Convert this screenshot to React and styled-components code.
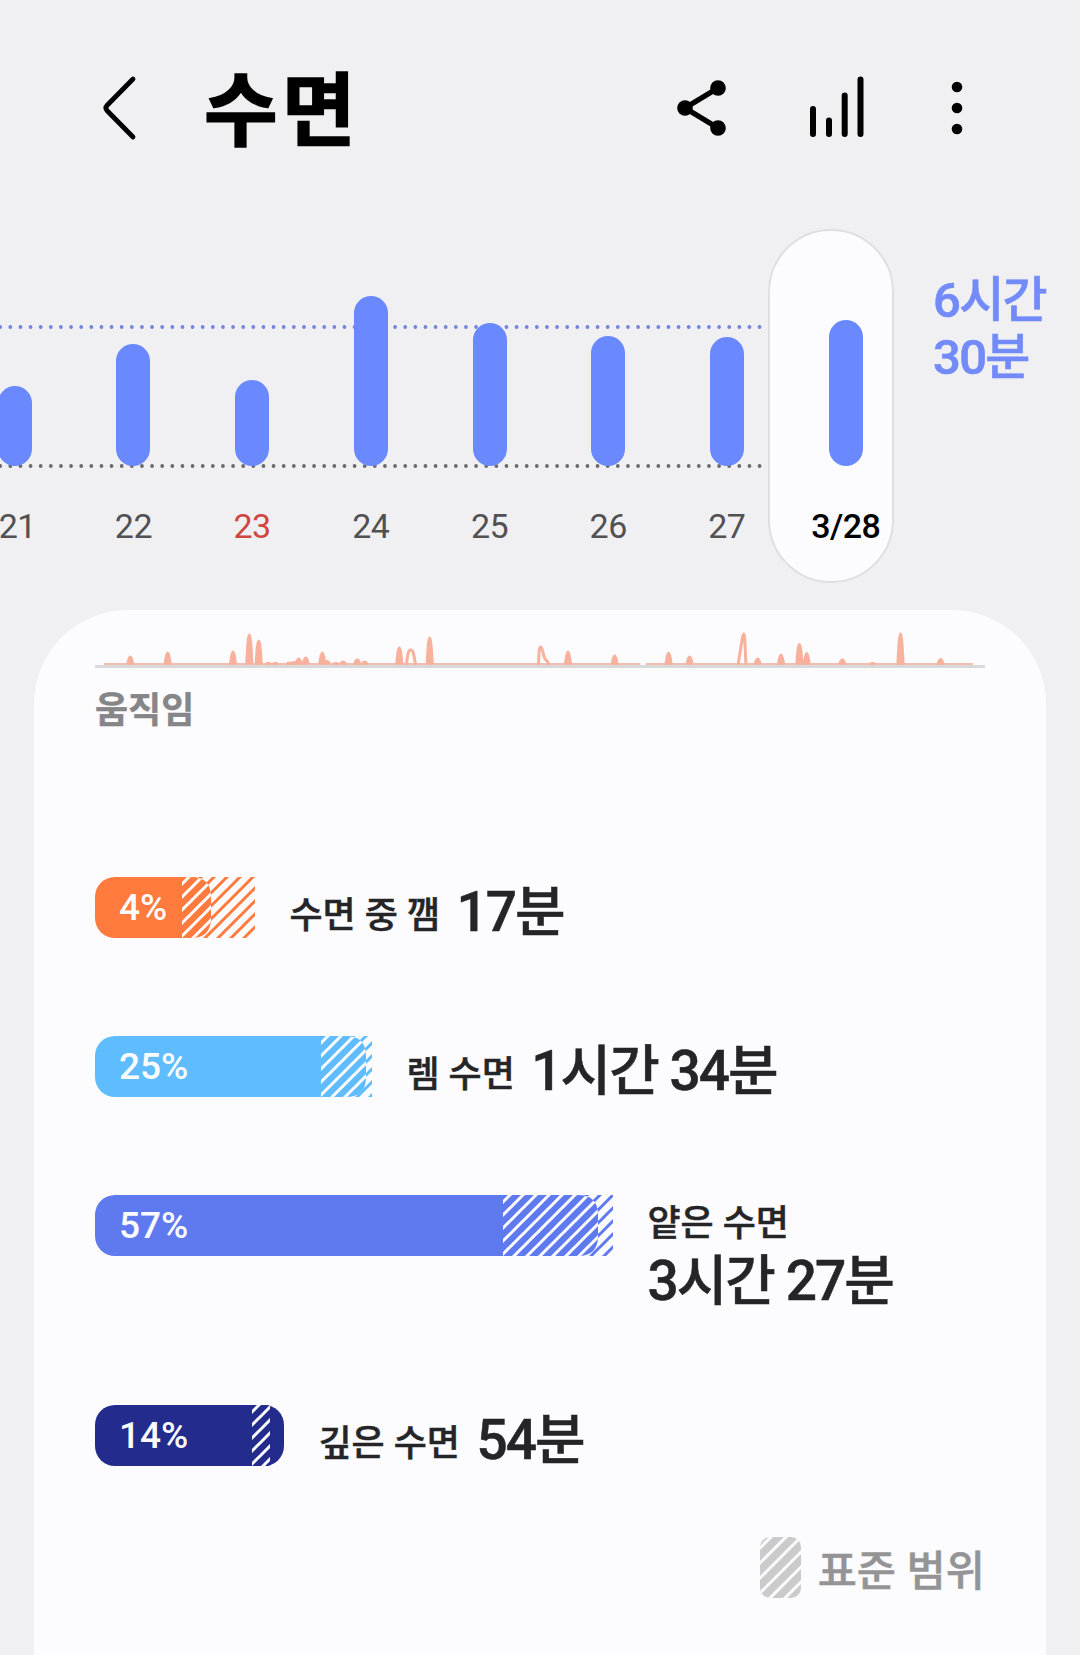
import React, { useId } from 'react';
import styled, { createGlobalStyle } from 'styled-components';

const days = [
  { label: '21', height: 80.5 },
  { label: '22', height: 122.5 },
  { label: '23', height: 86, holiday: true },
  { label: '24', height: 170 },
  { label: '25', height: 143 },
  { label: '26', height: 130.5 },
  { label: '27', height: 129.5 },
];

const stages = [
  { name: '수면 중 깸', time: '17분', percent: '4%', color: '#ff7a3d', width: 116, total: 160, from: 87, to: 160 },
  { name: '렘 수면', time: '1시간 34분', percent: '25%', color: '#5ebcff', width: 271, total: 277, from: 226, to: 277 },
  { name: '얕은 수면', time: '3시간 27분', percent: '57%', color: '#5f7aef', width: 503, total: 518, from: 408, to: 518, stacked: true },
  { name: '깊은 수면', time: '54분', percent: '14%', color: '#232c8c', width: 189, total: 189, from: 157, to: 175 },
];

// [x, height] of every narrow spike, measured on the movement axis
const spikes = [
  [35.3, 7], [72.7, 11], [138, 12], [154.3, 29], [163.7, 23], [173.3, 0.8], [180.3, 0.8],
  [194.3, 1], [199, 1.4], [203.7, 5], [210.7, 6], [227.3, 11], [232, 2.5], [241, 0.6], [248, 2],
  [262.3, 4], [269.7, 2], [304.3, 16], [334.7, 26], [473, 12], [519.6, 8], [573.6, 11],
  [594.6, 7], [662.7, 5], [686, 9], [704.4, 19.5], [711.7, 10.5], [747.3, 4], [777.5, 0.6],
  [805.5, 30], [845.6, 4.5],
];

const spikePath = ([x, h]) =>
  `M${x - 2.6} 34.4 C${x - 1.8} ${34 - h * 0.6} ${x - 1} ${34 - h} ${x} ${34 - h} C${x + 1} ${34 - h} ${x + 1.8} ${34 - h * 0.6} ${x + 2.6} 34.4`;

const Movement = () => (
  <MovementChart viewBox="0 0 890 42">
    <rect x="0" y="35" width="890" height="3" fill="#d9d9da" />
    <path d="M9 34H545.3M550.7 34H878" stroke="#f0bfb1" strokeWidth="2.2" fill="none" />
    <g fill="none" stroke="#f8b19c" strokeWidth="3" strokeLinejoin="round">
      {spikes.map((s) => (
        <path key={s[0]} d={spikePath(s)} fill="#f8b19c" />
      ))}
      <path d="M311.5 35C312.5 24 313.5 20 315.7 20C318 20 319 24 320.5 35" />
      <path d="M443.5 35C444 24 444 17 445.5 17C448 17 448 27 450.5 29.5C453 31 453 32 454 35" />
      <path d="M643 35C646 18 647.5 4 648.8 4C650 4 650 18 651 35" />
    </g>
  </MovementChart>
);

const StageHatch = ({ stage }) => {
  const id = useId();
  const w = stage.to - stage.from;
  const end = stage.width - stage.from;
  const inner = `M-30 0H${end - 20}Q${end} 0 ${end} 20V41Q${end} 61 ${end - 20} 61H-30Z`;
  return (
    <Hatch $left={stage.from} width={w} height="61" viewBox={`0 0 ${w} 61`}>
      <defs>
        <pattern id={`${id}p`} x="6" width="13" height="13" patternUnits="userSpaceOnUse">
          <path d="M-3 16L16 -3M-3 3L3 -3M10 16L16 10" stroke={stage.color} strokeWidth="3" />
        </pattern>
        <pattern id={`${id}w`} x="7" width="13" height="13" patternUnits="userSpaceOnUse">
          <path d="M-3 16L16 -3M-3 3L3 -3M10 16L16 10" stroke="#fcfcfe" strokeWidth="3" />
        </pattern>
      </defs>
      {w > end && <rect width={w} height="61" fill="#fcfcfe" />}
      {w > end && <rect width={w} height="61" fill={`url(#${id}p)`} />}
      <path d={inner} fill={stage.color} />
      <path d={inner} fill={`url(#${id}w)`} />
    </Hatch>
  );
};

const App = () => {
  return (
    <Screen>
      <GlobalStyle />
      <Header>
        <BackIcon viewBox="0 0 36 66">
          <path d="M32 4L6.2 30.2Q3.6 33 6.2 35.8L32 62" fill="none" stroke="#000" strokeWidth="4.8" strokeLinecap="round" />
        </BackIcon>
        <Title>수면</Title>
        <ShareIcon viewBox="0 0 50 56">
          <path d="M41 8L8 28L41 48" fill="none" stroke="#000" strokeWidth="5.4" />
          <circle cx="8" cy="28" r="7.8" />
          <circle cx="41" cy="8" r="7.8" />
          <circle cx="41" cy="48" r="7.8" />
        </ShareIcon>
        <TrendIcon viewBox="0 0 56 62">
          <path d="M4 33V58M20 44.5V58M35.7 19.5V58M51.5 3.5V58" stroke="#000" strokeWidth="6" strokeLinecap="round" />
        </TrendIcon>
        <MoreIcon viewBox="0 0 12 54">
          <circle cx="6" cy="6" r="5.3" />
          <circle cx="6" cy="27" r="5.3" />
          <circle cx="6" cy="48" r="5.3" />
        </MoreIcon>
      </Header>

      <History>
        <Week>
          <Guides viewBox="0 0 770 145">
            <path d="M0.2 3H768" stroke="#7484dc" />
            <path d="M0.2 142H768" stroke="#6a6a6e" />
          </Guides>
          {days.map((day) => (
            <Day key={day.label}>
              <DayBar style={{ height: day.height }} />
              <DayLabel $holiday={day.holiday}>{day.label}</DayLabel>
            </Day>
          ))}
        </Week>
        <Selected>
          <DayBar style={{ height: 146 }} />
          <DayLabel $current>3/28</DayLabel>
        </Selected>
        <Goal>
          6시간
          <br />
          30분
        </Goal>
      </History>

      <Card>
        <Movement />
        <MovementLabel>움직임</MovementLabel>
        <Stages>
          {stages.map((stage) => (
            <Stage key={stage.name} $stacked={stage.stacked}>
              <StageTrack style={{ width: stage.total }}>
                <StageBar $color={stage.color} style={{ width: stage.width }}>
                  {stage.percent}
                </StageBar>
                <StageHatch stage={stage} />
              </StageTrack>
              <StageText $stacked={stage.stacked}>
                <StageName $stacked={stage.stacked}>{stage.name}</StageName>
                <StageTime>{stage.time}</StageTime>
              </StageText>
            </Stage>
          ))}
        </Stages>
        <Legend>
          <LegendSwatch viewBox="0 0 41 61">
            <defs>
              <clipPath id="swatch">
                <rect width="41" height="61" rx="10" />
              </clipPath>
            </defs>
            <g clipPath="url(#swatch)">
              <rect width="41" height="61" fill="#cbcbcc" />
              <path
                d="M-5 16L16 -5M-5 31L31 -5M-5 46L46 -5M-5 61L50 6M-5 76L50 21M5 81L50 36M20 81L50 51"
                stroke="#fcfcfe"
                strokeWidth="3"
              />
            </g>
          </LegendSwatch>
          <LegendText>표준 범위</LegendText>
        </Legend>
      </Card>
    </Screen>
  );
};

export default App;

const GlobalStyle = createGlobalStyle`
  body {
    margin: 0;
    background: #f0f0f2;
  }
  * {
    box-sizing: border-box;
  }
`;

const Screen = styled.div`
  width: 1080px;
  height: 1655px;
  overflow: hidden;
  background: #f0f0f2;
  font-family: Roboto, 'Noto Sans CJK KR', sans-serif;
`;

const Header = styled.header`
  display: flex;
  align-items: center;
  height: 215px;
  padding-left: 101px;
`;

const BackIcon = styled.svg`
  width: 36px;
  height: 66px;
`;

const Title = styled.h1`
  width: 540px;
  margin: 0;
  padding: 8px 0 0 67px;
  font-size: 80px;
  line-height: 100px;
  font-weight: 700;
  letter-spacing: 4.5px;
  -webkit-text-stroke: 1.6px #000;
`;

const ShareIcon = styled.svg`
  width: 50px;
  height: 56px;
`;

const TrendIcon = styled.svg`
  width: 56px;
  height: 62px;
  margin: -2px 0 0 82px;
`;

const MoreIcon = styled.svg`
  width: 12px;
  height: 54px;
  margin-left: 86px;
`;

const History = styled.section`
  display: flex;
  height: 395px;
`;

const Week = styled.div`
  position: relative;
  display: flex;
  flex: none;
  width: 768px;
  margin-top: 14px;
  height: 354px;
`;

const Guides = styled.svg`
  position: absolute;
  left: 0;
  top: 95px;
  width: 770px;
  height: 145px;

  path {
    stroke-width: 3.8;
    stroke-linecap: round;
    stroke-dasharray: 0 10.125;
  }
`;

const Day = styled.div`
  position: relative;
  display: flex;
  flex: none;
  flex-direction: column;
  align-items: center;
  justify-content: flex-end;
  width: 118.7px;
  padding-bottom: 36px;

  &:nth-child(2) {
    margin-left: -44.6px;

    span {
      padding-left: 5px;
    }
  }
`;

const DayBar = styled.div`
  width: 34px;
  border-radius: 17px;
  background: #6b89ff;
`;

const DayLabel = styled.span`
  margin-top: 40px;
  font-size: 34px;
  letter-spacing: -0.5px;
  line-height: 41px;
  font-weight: ${(p) => (p.$current ? 500 : 400)};
  color: ${(p) => (p.$current ? '#000' : p.$holiday ? '#cf4640' : '#515153')};
`;

const Selected = styled.div`
  position: relative;
  display: flex;
  flex: none;
  flex-direction: column;
  align-items: center;
  justify-content: flex-end;
  width: 125.5px;
  height: 354px;
  margin-top: 14px;
  padding: 0 0 34px 30px;
  border: 2px solid #dfdfe1;
  border-radius: 63px;
  background: #fcfcfe;
`;

const Goal = styled.div`
  margin: 57px 0 0 39.5px;
  white-space: nowrap;
  font-size: 49px;
  letter-spacing: -1.7px;
  line-height: 57px;
  font-weight: 500;
  color: #728bf9;
  -webkit-text-stroke: 0.6px #728bf9;
`;

const Card = styled.main`
  width: 1012px;
  height: 1100px;
  margin-left: 34px;
  padding: 20px 61px 0;
  border-radius: 94px 94px 0 0;
  background: #fcfcfe;
`;

const MovementChart = styled.svg`
  display: block;
  width: 890px;
  height: 42px;
`;

const MovementLabel = styled.div`
  margin-top: 18px;
  font-size: 36px;
  line-height: 42px;
  font-weight: 700;
  color: #868688;
  -webkit-text-stroke: 0.4px #868688;
`;

const Stages = styled.div`
  display: flex;
  flex-direction: column;
  gap: 98px;
  margin-top: 145px;
`;

const Stage = styled.div`
  display: flex;
  height: ${(p) => (p.$stacked ? 112 : 61)}px;
`;

const StageTrack = styled.div`
  position: relative;
  flex: none;
  height: 61px;
`;

const StageBar = styled.div`
  height: 61px;
  padding-left: 24px;
  border-radius: 20px;
  background: ${(p) => p.$color};
  color: #fcfcfe;
  font-size: 37px;
  line-height: 61px;
  font-weight: 500;
`;

const Hatch = styled.svg`
  position: absolute;
  top: 0;
  left: ${(p) => p.$left}px;
`;

const StageText = styled.div`
  display: flex;
  flex-direction: ${(p) => (p.$stacked ? 'column' : 'row')};
  align-items: ${(p) => (p.$stacked ? 'stretch' : 'flex-start')};
  gap: ${(p) => (p.$stacked ? 1 : 16.5)}px;
  margin-left: 34.5px;
  padding-top: ${(p) => (p.$stacked ? 6 : 2)}px;
  color: #252527;
  white-space: nowrap;
  -webkit-text-stroke: 0.5px #252527;
`;

const StageName = styled.span`
  padding-top: ${(p) => (p.$stacked ? 0 : 14)}px;
  font-size: 36px;
  line-height: 46px;
  font-weight: 500;
`;

const StageTime = styled.span`
  font-size: 55px;
  letter-spacing: -2px;
  line-height: 66px;
  font-weight: 500;
`;

const Legend = styled.div`
  display: flex;
  align-items: center;
  justify-content: flex-end;
  margin-top: 71px;
`;

const LegendSwatch = styled.svg`
  width: 41px;
  height: 61px;
  margin-right: 17px;
`;

const LegendText = styled.span`
  padding-top: 7px;
  font-size: 42.6px;
  line-height: 54px;
  font-weight: 500;
  color: #949496;
  -webkit-text-stroke: 0.5px #949496;
`;
